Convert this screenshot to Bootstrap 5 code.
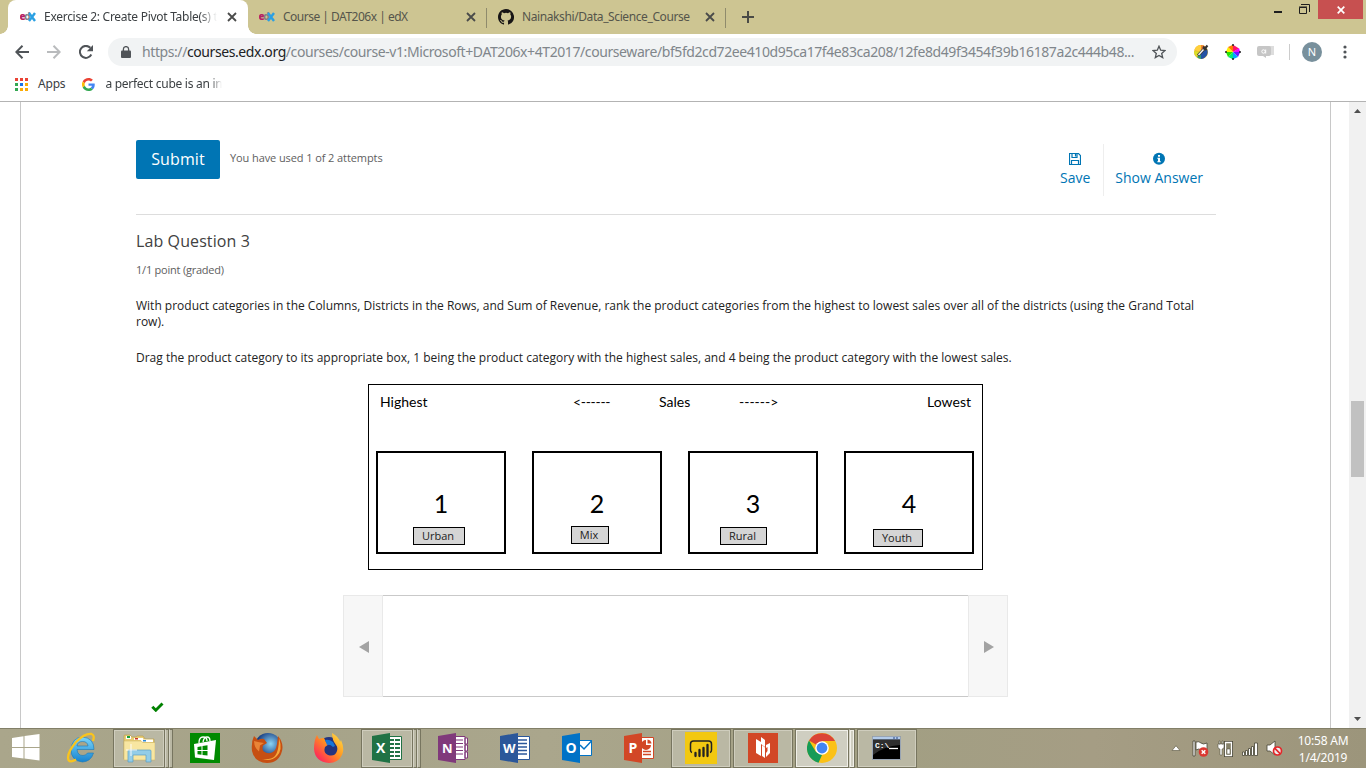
<!DOCTYPE html>
<html lang="en">
<head>
<meta charset="utf-8">
<meta name="viewport" content="width=device-width, initial-scale=1">
<title>Exercise 2: Create Pivot Table(s)</title>
<link rel="stylesheet" href="https://cdn.jsdelivr.net/npm/bootstrap@5.3.0/dist/css/bootstrap.min.css">
<style>
body{width:1366px;height:768px;overflow:hidden;font-family:"Open Sans",sans-serif;font-size:12px;color:#313131;background:#fff}
svg{display:block;flex:none}
.ui{font-family:"Noto Sans","Open Sans",sans-serif}
.tabstrip{height:34px;background:#cdc592;padding-left:8px}
.tab{width:239px;height:34px;padding:0 11px 0 11px;color:#55554b;position:relative}
.tab.on{background:#fff;border-radius:8px 8px 0 0;color:#3c4043;width:240px;padding-left:12px}
.tab.on::before,.tab.on::after{content:"";position:absolute;bottom:0;width:8px;height:8px}
.tab.on::before{left:-8px;background:radial-gradient(circle at 0 0,transparent 7.5px,#fff 8px)}
.tab.on::after{right:-8px;background:radial-gradient(circle at 100% 0,transparent 7.5px,#fff 8px)}
.tab-title{margin-left:8px;white-space:nowrap;line-height:20px;flex:none;letter-spacing:-.35px}
.fade-end{-webkit-mask-image:linear-gradient(90deg,#000 90%,transparent)}
.sep{width:1px;height:20px;background:#8f8b6c}
.winbtns{margin-left:auto;height:19px;margin-right:3px}
.close-win{width:45px;height:19px;background:#c75050}
.toolbar{height:36px}
.omni{width:1069px;flex:none;height:28px;border-radius:14px;background:#f1f3f4;margin-left:13px;padding:0 11px 0 13px}
.url{font-size:14px;color:#80868b;white-space:nowrap;margin-left:11px;line-height:20px;letter-spacing:-.413px}
.url b{font-weight:400;color:#202124}
.bookmarks{height:31px;padding-bottom:3px;color:#3c4043}
.page-area{height:627px;border-top:1px solid #b3b3b3}
.course{margin-left:20px;width:1311px;border:solid #c8c8c8;border-width:0 1px;padding:38px 114px 0 115px}
.scroller{width:17px;background:#f1f1f1;margin-left:18px}
.thumb{width:13px;height:76px;background:#c1c1c1;margin-top:284px}
.btn-submit{width:84px;height:39px;border-radius:2px;background:#0075b4;color:#fff;font-size:16px;padding:0 0 2px;border:0;letter-spacing:.1px}
.attempts{font-size:11px;color:#5e5e5e;margin:-2px 0 0 10px;letter-spacing:-.09px}
.act{color:#0075b4;font-size:14px;line-height:18px;height:52px;padding-top:8px}
.act svg{margin-bottom:4px}
.rule{height:1px;background:#ddd}
.q-title{font-size:16px;line-height:22px;margin:15px 0 0;font-weight:400;color:#414141;letter-spacing:.1px}
.q-grade{font-size:11px;line-height:16px;margin-top:10px;color:#5e5e5e;letter-spacing:-.22px}
.q-text{line-height:16px;margin:20px 0 0;color:#222}
.board{width:615px;height:186px;border:1px solid #000;margin:18px 0 0 232px;padding:8px 8px 0 7px;font-family:Lato,sans-serif;color:#000}
.board-head{font-size:14px;line-height:18px;height:58px}
.slot{width:130px;height:103px;border:2px solid #000;font-size:25px;line-height:30px;padding-top:35px;position:relative;text-align:center}
.chip{position:absolute;height:18px;border:1px solid #000;background:#d5d5d5;font:11px/16px "Open Sans",sans-serif;color:#222;padding-right:2px}
.bank{width:665px;height:102px;margin:25px 0 0 207px}
.bank-side{width:40px;background:#f7f7f7;border:1px solid #e9e9e9;padding:1px 0 0 1px}
.bank-mid{border:solid #c9c9c9;border-width:1px 0}
.taskbar{height:40px;border-top:1px solid #827f68;background:linear-gradient(90deg,#aaa68b,#a6a389 20%,#aaa68c 40%,#a29f83 65%,#a59d84 80%,#9c957b)}
.task{width:60px;height:39px;margin-right:2px;padding-bottom:1px}
.run{background:#bab8a4;border:1px solid #77755f;box-shadow:inset 0 0 0 1px #cfcdbd}
.stack{width:52px;margin-right:0}
.edge{width:4px;height:39px;background:#bab8a4;border:1px solid #77755f;border-left:1px solid #d5d3c6}
.live{background:#cfcec1;width:54px;box-shadow:inset 0 0 0 1px #f1f0e9}
.clock{width:60px;color:#fff;text-align:center;line-height:17px;letter-spacing:-.2px}
</style>
</head>
<body>
<svg width="0" height="0" class="position-absolute">
 <defs>
  <symbol id="x" viewBox="0 0 10 10"><path d="M1 1l8 8M9 1l-8 8" stroke="#4a4b4a" stroke-width="1.8"/></symbol>
  <symbol id="edx" viewBox="0 0 16 10"><text x="-.4" y="8" font-family="Open Sans" font-weight="800" font-size="10" fill="#b52164" textLength="6">e</text><text x="4.2" y="8" font-family="Open Sans" font-weight="700" font-size="10" fill="#807c83" textLength="6">d</text><path d="M9 1l6 8M15 1L9 9" stroke="#2aa0e3" stroke-width="2.4"/></symbol>
  <linearGradient id="ff" x1="1" y1="0" x2="0" y2="1"><stop offset="0" stop-color="#ffe94a"/><stop offset=".45" stop-color="#ff9320"/><stop offset=".8" stop-color="#ff3850"/><stop offset="1" stop-color="#e31587"/></linearGradient>
  <linearGradient id="ie" x1="0" y1="0" x2="0" y2="1"><stop offset="0" stop-color="#7ad6fb"/><stop offset="1" stop-color="#1783cf"/></linearGradient>
  <radialGradient id="ball" cx=".6" cy=".4"><stop offset="0" stop-color="#8bd5f5"/><stop offset="1" stop-color="#173d83"/></radialGradient>
 </defs>
</svg>

<header class="ui">
 <div class="tabstrip d-flex">
  <div class="tab on d-flex align-items-center"><svg width="16" height="10"><use href="#edx"/></svg><span class="tab-title fade-end" style="letter-spacing:-.28px">Exercise 2: Create Pivot Table(s) t</span><svg class="ms-auto" width="10" height="10"><use href="#x"/></svg></div>
  <div class="tab d-flex align-items-center"><svg width="16" height="10"><use href="#edx"/></svg><span class="tab-title" style="letter-spacing:-.5px">Course | DAT206x | edX</span><svg class="ms-auto" width="10" height="10"><use href="#x"/></svg></div>
  <div class="sep mt-2" style="margin-left:-1px"></div>
  <div class="tab d-flex align-items-center"><svg width="16" height="16" viewBox="0 0 16 16"><path fill="#171515" d="M8 0C3.58 0 0 3.58 0 8c0 3.54 2.29 6.53 5.47 7.59.4.07.55-.17.55-.38v-1.49c-2.01.37-2.53-.49-2.69-.94-.09-.23-.48-.94-.82-1.13-.28-.15-.68-.52-.01-.53.63-.01 1.08.58 1.23.82.72 1.21 1.87.87 2.33.66.07-.52.28-.87.51-1.07-1.78-.2-3.64-.89-3.64-3.95 0-.87.31-1.59.82-2.15-.08-.2-.36-1.02.08-2.12 0 0 .67-.21 2.2.82a7.5 7.5 0 0 1 4 0c1.53-1.04 2.2-.82 2.2-.82.44 1.1.16 1.92.08 2.12.51.56.82 1.27.82 2.15 0 3.07-1.87 3.75-3.65 3.95.29.25.54.73.54 1.48v2.2c0 .21.15.46.55.38A8 8 0 0 0 8 0z"/></svg><span class="tab-title" style="letter-spacing:-.4px">Nainakshi/Data_Science_Course</span><svg class="ms-auto" width="10" height="10"><use href="#x"/></svg></div>
  <div class="sep mt-2" style="margin-left:-1px"></div>
  <svg class="ms-3 mt-2" width="12" height="18" viewBox="0 0 12 18"><path d="M0 9h12M6 3v12" stroke="#4a4b46" stroke-width="2"/></svg>
  <div class="winbtns d-flex align-items-center">
   <svg width="37" height="19" viewBox="0 0 37 19"><path d="M1 12h8" stroke="#1e1e1e" stroke-width="2"/><path d="M26.500 7.500h7v6h-7z" fill="none" stroke="#1e1e1e"/><path d="M26 7h8M28 4.500h8.500V12" fill="none" stroke="#1e1e1e"/></svg>
   <div class="close-win ms-2 d-flex align-items-center justify-content-center"><svg width="8" height="8" viewBox="0 0 8 8"><path d="M.7.7l6.600 6.600M7.300.7L.7 7.300" stroke="#fff" stroke-width="1.700"/></svg></div>
  </div>
 </div>
 <div class="toolbar d-flex align-items-center" style="padding-left:15px">
  <svg width="14" height="14" viewBox="0 0 14 14"><path d="M14 7H1.500M7.500.8L1.300 7l6.200 6.200" fill="none" stroke="#505458" stroke-width="2"/></svg>
  <svg style="margin-left:18px" width="14" height="14" viewBox="0 0 14 14"><path d="M0 7h12.500M6.500.8L12.700 7l-6.200 6.200" fill="none" stroke="#b9bbbd" stroke-width="2"/></svg>
  <svg style="margin-left:18px" width="14" height="14" viewBox="0 0 14 14"><path d="M12.300 9.500A6 6 0 1 1 11.300 2.800" fill="none" stroke="#505458" stroke-width="2"/><path d="M14 0v6.200H7.800z" fill="#505458"/></svg>
  <div class="omni d-flex align-items-center" style="margin-left:15px">
   <svg width="10" height="12" viewBox="0 0 10 12"><path d="M1 4.500h8q1 0 1 1V11q0 1-1 1H1q-1 0-1-1V5.500q0-1 1-1z" fill="#505458"/><path d="M2.400 5V3a2.600 2.400 0 0 1 5.200 0v2" fill="none" stroke="#505458" stroke-width="1.300"/></svg>
   <span class="url">https://<b>courses.edx.org</b>/courses/course-v1:Microsoft+DAT206x+4T2017/courseware/bf5fd2cd72ee410d95ca17f4e83ca208/12fe8d49f3454f39b16187a2c444b48...</span>
   <svg class="ms-auto" width="14" height="14" viewBox="0 0 14 14"><path d="M7 1.200l1.700 4 4.200.4-3.200 2.800 1 4.200L7 10.400l-3.700 2.200 1-4.200L1.100 5.600l4.200-.4z" fill="none" stroke="#505458" stroke-width="1.300"/></svg>
  </div>
  <svg style="margin-left:16px" width="16" height="16" viewBox="0 0 16 16"><circle cx="8" cy="8" r="7" fill="#e9b72c"/><path d="M8 8V1A7 7 0 0 0 1.500 6z" fill="#ffcf3c"/><path d="M8 8V1a7 7 0 0 1 5 2z" fill="#f18132"/><path d="M8 8l-7-1a7 7 0 0 0 3 6z" fill="#dadd28"/><path d="M8 8l6-3a7 7 0 0 1-6 10z" fill="#2452a5"/><path d="M8 8l-4 5q2 2 4 2z" fill="#2b9b79"/><path d="M5 11.500L11.500 4.500" stroke="#383838" stroke-width="2.800"/><path d="M5.500 11l5-5.500" stroke="#f2f2f2" stroke-width="1.500"/><path d="M10 2.500l3.500 3.500M12 4.500l2.500-3" stroke="#333" stroke-width="2"/></svg>
  <svg style="margin-left:16px" width="16" height="16" viewBox="0 0 16 16"><path d="M8 8V0.800L14 4.500z" fill="#ff1463"/><path d="M8 8l6-4 1.200 4z" fill="#f200ff"/><path d="M8 8h7.200L13 13z" fill="#671cff"/><path d="M8 8l5 5-5 2.200z" fill="#00a8ff"/><path d="M8 8v7.200L3 13z" fill="#00e97d"/><path d="M8 8l-5 5L.8 8z" fill="#25e500"/><path d="M8 8H.8L3 3z" fill="#fff000"/><path d="M8 8L3 3 8 .8z" fill="#ff7b00"/><path d="M8 0v2M8 14v2M0 8h2M14 8h2" stroke="#222" stroke-width="1.500"/></svg>
  <svg style="margin-left:16px" width="17" height="16" viewBox="0 0 17 16"><path d="M12 2h5v9h-5z" fill="#ddd"/><path d="M2 2h10q2 0 2 2v6q0 2-2 2H9v2l-3-2H2q-2 0-2-2V4q0-2 2-2z" fill="#c6c6c6"/><circle cx="6.500" cy="7.500" r="1.700" fill="none" stroke="#fff"/><path d="M8.700 5.500v4" stroke="#fff"/></svg>
  <div style="width:1px;height:16px;background:#ccc;margin-left:15px"></div>
  <div class="rounded-circle d-flex align-items-center justify-content-center text-white" style="width:20px;height:20px;margin-left:12px;background:#78909c;font-size:11px">N</div>
  <svg style="margin-left:21px" width="4" height="14" viewBox="0 0 4 14"><g fill="#505458"><circle cx="2" cy="2" r="1.600"/><circle cx="2" cy="7" r="1.600"/><circle cx="2" cy="12" r="1.600"/></g></svg>
 </div>
 <div class="bookmarks d-flex align-items-center" style="padding-left:15px">
  <svg width="13" height="13" viewBox="0 0 13 13"><path d="M0 0h3v3H0zM5 0h3v3H5zM10 0h3v3h-3z" fill="#ea4335"/><path d="M0 5h3v3H0zM0 10h3v3H0z" fill="#34a853"/><path d="M5 5h3v3H5z" fill="#1a73e8"/><path d="M10 5h3v3h-3zM5 10h3v3H5zM10 10h3v3h-3z" fill="#fbab05"/></svg>
  <span style="margin-left:10px;letter-spacing:-.2px">Apps</span>
  <svg style="margin-left:17px" width="13" height="13" viewBox="0 0 48 48"><path fill="#ea4335" d="M24 9.500c3.500 0 6.700 1.200 9.200 3.600l6.900-6.900C35.900 2.400 30.500 0 24 0 14.600 0 6.500 5.400 2.600 13.200l8 6.200C12.400 13.700 17.700 9.500 24 9.500z"/><path fill="#4285f4" d="M47 24.600c0-1.600-.2-3.100-.4-4.600H24v9h12.900c-.6 3-2.200 5.500-4.700 7.200l7.700 6C44.400 38 47 31.800 47 24.600z"/><path fill="#fbbc05" d="M10.500 28.600a14 14 0 0 1 0-9.200l-8-6.200a24 24 0 0 0 0 21.600z"/><path fill="#34a853" d="M24 48c6.500 0 11.900-2.100 15.900-5.800l-7.700-6C30 37.700 27.200 38.500 24 38.500c-6.300 0-11.600-4.200-13.500-9.900l-8 6.200C6.500 42.600 14.600 48 24 48z"/></svg>
  <span class="text-nowrap fade-end" style="margin-left:10px;letter-spacing:-.27px">a perfect cube is an in</span>
 </div>
</header>

<div class="page-area d-flex">
 <main class="course">
  <div class="d-flex">
   <button class="btn-submit">Submit</button><span class="attempts align-self-center">You have used 1 of 2 attempts</span>
   <div class="d-flex ms-auto" style="margin-top:4px;height:35px">
    <div class="act d-flex flex-column align-items-center" style="padding-right:13px;border-right:1px solid #eee"><svg width="12" height="13" viewBox="0 0 12 13"><path d="M.5 1.500h9l2 2v9H.5zM3 1.500v4h5v-4M6.500 2v2.500M2.500 12.500v-4h7v4" fill="none" stroke="#0075b4" stroke-width="1.200"/></svg><span>Save</span></div>
    <div class="act d-flex flex-column align-items-center" style="padding:8px 13px 0 11px"><svg width="12" height="13" viewBox="0 0 12 13"><circle cx="6" cy="6.800" r="6" fill="#0075b4"/><path d="M5 3h2v1.700H5zM4.300 5.700H7v3.600h.8v1H4.300v-1H5V6.700h-.7z" fill="#fff"/></svg><span>Show Answer</span></div>
   </div>
  </div>
  <div class="rule" style="margin-top:35px"></div>
  <h3 class="q-title">Lab Question 3</h3>
  <div class="q-grade">1/1 point (graded)</div>
  <p class="q-text">With product categories in the Columns, Districts in the Rows, and Sum of Revenue, rank the product categories from the highest to lowest sales over all of the districts (using the Grand Total<br>row).</p>
  <p class="q-text">Drag the product category to its appropriate box, 1 being the product category with the highest sales, and 4 being the product category with the lowest sales.</p>
  <div class="board">
   <div class="board-head d-flex"><span style="width:197px;padding-left:4px">Highest</span><span style="width:86px;letter-spacing:-.3px">&lt;------</span><span style="width:80px">Sales</span><span>------&gt;</span><span class="ms-auto" style="padding-right:3px">Lowest</span></div>
   <div class="d-flex justify-content-between">
    <div class="slot">1<span class="chip" style="left:35px;top:74px;width:52px">Urban</span></div>
    <div class="slot">2<span class="chip" style="left:37px;top:73px;width:38px">Mix</span></div>
    <div class="slot">3<span class="chip" style="left:30px;top:74px;width:47px">Rural</span></div>
    <div class="slot">4<span class="chip" style="left:27px;top:76px;width:50px">Youth</span></div>
   </div>
  </div>
  <div class="bank d-flex">
   <div class="bank-side d-flex align-items-center justify-content-center"><svg width="10" height="12" viewBox="0 0 10 12"><path d="M10 0v12L0 6z" fill="#a3a3a3"/></svg></div>
   <div class="bank-mid flex-grow-1"></div>
   <div class="bank-side d-flex align-items-center justify-content-center"><svg width="10" height="12" viewBox="0 0 10 12"><path d="M0 0v12l10-6z" fill="#a3a3a3"/></svg></div>
  </div>
  <svg style="margin:5px 0 0 15px" width="13" height="10" viewBox="0 0 13 10"><path d="M1.300 4.700l3.500 3.500 6.700-6.700" fill="none" stroke="#008100" stroke-width="2.900"/></svg>
 </main>
 <div class="scroller d-flex flex-column align-items-center">
  <svg style="margin-top:7px;margin-bottom:4px" width="7" height="4" viewBox="0 0 7 4"><path d="M0 4h7L3.500 0z" fill="#505050"/></svg>
  <div class="thumb"></div>
  <svg class="mt-auto" style="margin-bottom:7px" width="7" height="4" viewBox="0 0 7 4"><path d="M0 0h7L3.500 4z" fill="#505050"/></svg>
 </div>
</div>

<footer class="taskbar d-flex ui">
 <div class="d-flex align-items-center justify-content-center" style="width:51px;padding-bottom:1px"><svg width="28" height="28" viewBox="0 0 28 28"><path d="M0 4l11.500-1.800V13H0zM12.500 2L27.500 0v13h-15zM0 14h11.500v10.500L0 23zM12.500 14h15v12.500l-15-2z" fill="#fff"/></svg></div>
 <div class="task d-flex align-items-center justify-content-center"><svg width="32" height="32" viewBox="0 0 32 32"><path d="M29 17.500H12q.5 6 6 6 3 0 4.500-2.500h6Q26 29.500 17.500 30 6 29 6 17.500 7 5.500 17.500 5 29 6 29 17.500zM12 14h11q-.5-4.500-5.500-4.500T12 14z" fill="url(#ie)" stroke="#1a79b9" stroke-width=".6"/><path d="M28 9q2-6-1.500-7Q20 1 11 10 1 22 3.500 28q2 3 7.500-.5" fill="none" stroke="#f9c41d" stroke-width="2.300"/></svg></div>
 <div class="task stack run d-flex align-items-center justify-content-center"><svg width="32" height="30" viewBox="0 0 32 30"><path d="M1 3q0-1 1-1h5l2 2h4l1-1h6l2 3h9v20H1z" fill="#e9cd76" stroke="#b89a45" stroke-width=".6"/><path d="M3 3h5v3H3z" fill="#fff"/><path d="M4 3h3v2H4z" fill="#17a03a"/><path d="M11 5h9v2h-9z" fill="#fff"/><path d="M12 5h3v1.500h-3z" fill="#c93a27"/><path d="M18 6.500h12V9H18z" fill="#fff"/><path d="M20 7h3v1.500h-3z" fill="#2b87d1"/><path d="M1 8h17l2 1.500h12V27H1z" fill="#f8e6a1" stroke="#cbb060" stroke-width=".5"/><path d="M5 29V18q0-1 1-1h21q1 0 1 1v11h-5v-7H10v7z" fill="#93cde8" stroke="#5b9fc1" stroke-width=".7"/><path d="M8 11v12M3 17h11" stroke="#fff" stroke-width=".9"/></svg></div><div class="edge"></div><div class="edge" style="margin-right:2px"></div>
 <div class="task d-flex align-items-center justify-content-center"><svg width="30" height="30" viewBox="0 0 30 30"><path d="M0 0h30v30H0z" fill="#008a00"/><path d="M4 11l22-4-2 20-19-2.500z" fill="#fff"/><path d="M9 10q0-6 4-6t4 4M13 9q1-5 4-5t3 4" fill="none" stroke="#fff" stroke-width="1.300"/><path d="M7.500 14l4-.7V17h-4zM12.500 13l5-.8V17h-5zM7.500 18h4v3.700l-4-.5zM12.500 18h5v4.500l-5-.6z" fill="#008a00"/></svg></div>
 <div class="task d-flex align-items-center justify-content-center"><svg width="32" height="32" viewBox="0 0 32 32"><circle cx="17" cy="14.500" r="13.500" fill="url(#ball)"/><path d="M3 4l4 4q3-2 6-1l3 4-4 2.500q-2 6 4 7.500 7 1 9-5l1-4 1-8q6 7 4 15-3 12-15 12Q3 30 1 19 0 10 3 4z" fill="#c64f12"/><path d="M28 6q4 12-2 18-6 6-15 3 9 1 13-3 4-5 4-18z" fill="#f4a83c"/><path d="M3 9l4 1 6 1-4 2.500-1 6q-5-4-5-10.500z" fill="#e98436"/></svg></div>
 <div class="task d-flex align-items-center justify-content-center"><svg width="30" height="32" viewBox="0 0 30 32"><circle cx="15" cy="17" r="12" fill="#24347e"/><path d="M18 1q7 4 8 9l1-2q4 9 1 15-4 8-13 8Q1 30 0 17 0 8 3 3l2 4q2-1 5-1l2 4 3 2-4 3q-2 6 3 8 7 2 9-4 1-4-1-6-4-5-4-12z" fill="url(#ff)"/><path d="M11 8q4-1 8 2l2 4-2 1q-3-3-6-2z" fill="#1976d9"/></svg></div>
 <div class="task stack run d-flex align-items-center justify-content-center"><svg width="30" height="30" viewBox="0 0 30 30"><path d="M16 3.500h13.500v23H16z" fill="#fff" stroke="#207245"/><path d="M18 6h4v2h-4zm5 0h5v2h-5zm-5 4h4v2h-4zm5 0h5v2h-5zm-5 4h4v2h-4zm5 0h5v2h-5zm-5 4h4v2h-4zm5 0h5v2h-5zm-5 4h4v2h-4zm5 0h5v2h-5z" fill="#207245"/><path d="M0 3l18-3v30L0 27z" fill="#207245"/><text x="4" y="20" font-family="Open Sans" font-weight="700" font-size="14" fill="#fff">X</text></svg></div><div class="edge"></div><div class="edge" style="margin-right:2px"></div>
 <div class="task d-flex align-items-center justify-content-center"><svg width="30" height="30" viewBox="0 0 30 30"><path d="M16 3.500h11v23H16zM27 5h2.500v6H27zM27 12h2.500v6H27zM27 19h2.500v6H27z" fill="#fff" stroke="#80397b"/><path d="M18 7h7M18 10.500h7M18 14h7M18 17.500h7M18 21h7" stroke="#80397b" stroke-width="1.200"/><path d="M0 3l18-3v30L0 27z" fill="#80397b"/><text x="4" y="20" font-family="Open Sans" font-weight="700" font-size="13" fill="#fff">N</text></svg></div>
 <div class="task d-flex align-items-center justify-content-center"><svg width="30" height="30" viewBox="0 0 30 30"><path d="M16 3.500h13.500v23H16z" fill="#fff" stroke="#2b579a"/><path d="M18 7h9M18 10.500h9M18 14h9M18 17.500h9M18 21h9" stroke="#2b579a" stroke-width="1.500"/><path d="M0 3l18-3v30L0 27z" fill="#2b579a"/><text x="3" y="20" font-family="Open Sans" font-weight="700" font-size="13" fill="#fff">W</text></svg></div>
 <div class="task d-flex align-items-center justify-content-center"><svg width="30" height="30" viewBox="0 0 30 30"><path d="M16 7.500h13.500v15H16z" fill="#fff" stroke="#0072c6"/><path d="M18 12l4 4 8-8.500" fill="none" stroke="#0072c6" stroke-width="1.500"/><path d="M0 3l18-3v30L0 27z" fill="#0072c6"/><text x="3.500" y="20" font-family="Open Sans" font-weight="700" font-size="14" fill="#fff">O</text></svg></div>
 <div class="task d-flex align-items-center justify-content-center"><svg width="30" height="30" viewBox="0 0 30 30"><path d="M16 4.500h13.500v21H16z" fill="#fff" stroke="#d24726"/><path d="M19 18.500h8M19 21.500h8" stroke="#d24726" stroke-width="1.500"/><path d="M22 7v5h5a5 5 0 1 1-5-5z" fill="#d24726"/><path d="M23.500 6.500a4.500 4.500 0 0 1 4 4h-4z" fill="#d24726"/><path d="M0 3l18-3v30L0 27z" fill="#d24726"/><text x="4.500" y="20" font-family="Open Sans" font-weight="700" font-size="14" fill="#fff">P</text></svg></div>
 <div class="task run d-flex align-items-center justify-content-center"><svg width="32" height="32" viewBox="0 0 32 32"><path d="M0 0h32v32H0z" fill="#f2c811"/><path d="M7 20.500q-1.500-.5-1.500-2.500v-6q0-3 3-3h15q3 0 3 3v6q0 2-1.500 2.500" fill="none" stroke="#222" stroke-width="1.500"/><path d="M10.500 24v-3M14.500 24v-6M18.500 24v-8M22.500 24V13" stroke="#222" stroke-width="2.300" stroke-linecap="round"/></svg></div>
 <div class="task run d-flex align-items-center justify-content-center"><svg width="30" height="30" viewBox="0 0 30 30"><path d="M0 0h30v30H0z" fill="#d24726"/><path d="M8 6l5 3v14l-5-3z" fill="#fff"/><path d="M13 4l4 3v7l-4-3z" fill="#fff"/><path d="M14 12l3 2.500V25l-3-2z" fill="#fff"/><path d="M18 12l4-2v10l-4 4v-4l1.500-2v-4L18 15z" fill="#fff"/></svg></div>
 <div class="task run live d-flex align-items-center justify-content-center" style="margin:0"><svg width="30" height="30" viewBox="0 0 30 30"><circle cx="15" cy="15" r="15" fill="#fbc116"/><path d="M15 15L2 7.500A15 15 0 0 1 28 8H15z" fill="#db4437"/><path d="M2 7.500L9 19l6 3-3.500 7.700A15 15 0 0 1 2 7.500z" fill="#159b58"/><circle cx="15" cy="15" r="6.800" fill="#fff"/><circle cx="15" cy="15" r="5.400" fill="#4285f4"/></svg></div><div class="edge live" style="width:6px;margin-right:2px"></div>
 <div class="task run d-flex align-items-center justify-content-center"><svg width="30" height="24" viewBox="0 0 30 24"><path d="M.5.5h28v23H.5z" fill="#000" stroke="#98a4b3"/><path d="M1 1h27v2.500H1z" fill="#b3cbea"/><path d="M21 2h2M24 2h2" stroke="#2a4885"/><path d="M1 4h27v5Q12 10 1 19z" fill="#2f2f2f"/><text x="3" y="12" font-family="Liberation Mono" font-weight="700" font-size="8" fill="#fff">C:\</text><path d="M17 12.500h9" stroke="#fff" stroke-width="1.300"/></svg></div>
 <div class="d-flex align-items-center ms-auto" style="margin-right:13px">
  <svg width="10" height="7" viewBox="0 0 10 7"><path d="M5 .7L9 5.500H1z" fill="#fff" stroke="#67634f" stroke-width=".7"/></svg>
  <svg style="margin-left:11px" width="17" height="18" viewBox="0 0 17 18"><path d="M1 1h2v15H1zM4 2q3-1 5 1t6 0v7q-4 2-6 0t-5 0z" fill="#fff" stroke="#474536" stroke-width=".8"/><circle cx="11.500" cy="12" r="4.800" fill="#db3831"/><path d="M9.700 10.200l3.600 3.600M13.300 10.200l-3.600 3.600" stroke="#fff" stroke-width="1.500"/></svg>
  <svg style="margin-left:8px" width="17" height="17" viewBox="0 0 17 17"><path d="M8.500 2.500h6v13h-6z" fill="#99957c" stroke="#474536" stroke-width="3"/><path d="M8.500 2.500h6v13h-6z" fill="#858169" stroke="#fff" stroke-width="1.300"/><path d="M10 9h3v5h-3zM1 4h6v3q0 2-2 2v6H3V9Q1 9 1 7zM2 1h1v3H2zM5 1h1v3H5z" fill="#fff" stroke="#474536" stroke-width=".5"/></svg>
  <svg style="margin-left:8px" width="17" height="14" viewBox="0 0 17 14"><path d="M.5 10h2v3.500h-2zM3.500 8.500h2v5h-2zM6.500 6.500h2v7h-2zM9.500 4.500h2v9h-2zM12.500 1h3v12.500h-3z" fill="#fff" stroke="#474536" stroke-width=".8"/></svg>
  <svg style="margin-left:7px" width="17" height="17" viewBox="0 0 17 17"><path d="M1 5h3l5-4v14l-5-4H1z" fill="#fff" stroke="#474536" stroke-width=".8"/><circle cx="11.500" cy="11" r="4" fill="#eee" stroke="#e52528" stroke-width="1.700"/><path d="M8.700 8.200l5.600 5.600" stroke="#e52528" stroke-width="1.700"/></svg>
  <div class="clock" style="margin-left:10px">10:58 AM<br>1/4/2019</div>
 </div>
</footer>
<script src="https://cdn.jsdelivr.net/npm/bootstrap@5.3.0/dist/js/bootstrap.bundle.min.js"></script>
</body>
</html>
